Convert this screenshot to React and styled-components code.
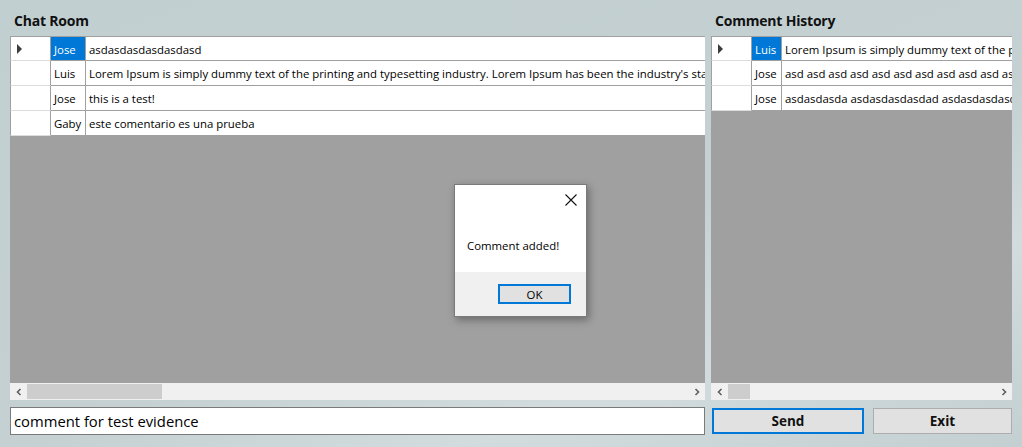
import React from "react";
import styled, { createGlobalStyle } from "styled-components";

const Global = createGlobalStyle`
  html, body { margin: 0; padding: 0; }
  body {
    width: 1022px; height: 447px; overflow: hidden;
    font-family: "Open Sans", "Noto Sans", sans-serif;
    background: linear-gradient(160deg, #c2cfd1 0%, #c4d0d2 55%, #d2dcde 75%, #c3cfd1 100%);
  }
`;

const Window = styled.div`
  width: 1022px;
  height: 447px;
  box-sizing: border-box;
  padding: 10px 10px 0 10px;
  display: grid;
  grid-template-columns: 695px 301px;
  grid-template-rows: 26px 364px 35px;
  column-gap: 6px;
  row-gap: 0;
  position: relative;
`;

const Title = styled.div`
  font-weight: 700;
  font-size: 14px;
  padding-left: 4px;
  line-height: 21px;
  color: #111;
  letter-spacing: -0.2px;
`;

const Grid = styled.div`
  position: relative;
  background: #a0a0a0;
  display: flex;
  flex-direction: column;
  overflow: hidden;
`;

const Rows = styled.div`
  flex: 1;
  display: flex;
  flex-direction: column;
  align-items: flex-start;
`;

const Row = styled.div`
  display: grid;
  grid-template-columns: ${(p) => p.$cols};
  height: 25px;
  width: 100%;
  background: #fff;
`;

const HeaderCell = styled.div`
  border-left: 1px solid #a0a0a0;
  border-top: ${(p) => (p.$first ? "1px solid #a0a0a0" : "none")};
  border-bottom: 1px solid #dcdcdc;
  border-right: 1px solid #a0a0a0;
  box-sizing: border-box;
  display: flex;
  align-items: center;
  padding-left: 6px;
`;

const Cell = styled.div`
  box-sizing: border-box;
  border-top: ${(p) => (p.$first ? "1px solid #a0a0a0" : "none")};
  border-bottom: 1px solid #a0a0a0;
  border-right: ${(p) => (p.$last ? "none" : "1px solid #a0a0a0")};
  background: ${(p) => (p.$sel ? "#0078d7" : "#fff")};
  color: ${(p) => (p.$sel ? "#fff" : "#000")};
  font-size: 11.4px;
  padding: 1px 3px 0 3px;
  display: flex;
  align-items: center;
  white-space: nowrap;
  overflow: hidden;
`;

const Arrow = styled.div`
  width: 0; height: 0;
  border-top: 5px solid transparent;
  border-bottom: 5px solid transparent;
  border-left: 5px solid #3c3c3c;
`;

const HScroll = styled.div`
  height: 17px;
  background: #f0f0f0;
  display: flex;
  align-items: stretch;
`;

const ScrollBtn = styled.div`
  width: 17px;
  display: flex;
  align-items: center;
  justify-content: center;
  color: #606060;
`;

const Track = styled.div`
  flex: 1;
  position: relative;
`;

const Thumb = styled.div`
  position: absolute;
  top: 1px; bottom: 1px;
  background: #cdcdcd;
`;

const BottomLeft = styled.div`
  padding-top: 7px;
`;

const Input = styled.input`
  width: 100%;
  height: 28px;
  box-sizing: border-box;
  border: 1px solid #7a7a7a;
  background: #fff;
  font-family: "Open Sans", "Noto Sans", sans-serif;
  font-size: 14.8px;
  padding: 0 3px;
  outline: none;
  color: #000;
`;

const Buttons = styled.div`
  padding-top: 8px;
  padding-left: 1px;
  display: grid;
  grid-template-columns: 152px 139px;
  column-gap: 9px;
`;

const Button = styled.button`
  height: 26px;
  box-sizing: border-box;
  background: #e1e1e1;
  border: ${(p) => (p.$primary ? "2px solid #0078d7" : "1px solid #adadad")};
  font-family: "Open Sans", "Noto Sans", sans-serif;
  font-weight: 700;
  font-size: 13.5px;
  color: #111;
  padding: 0;
`;

const Dialog = styled.div`
  position: absolute;
  left: 454px;
  top: 184px;
  width: 133px;
  height: 133px;
  box-sizing: border-box;
  border: 1px solid #7a7a7a;
  background: #fff;
  box-shadow: 2px 3px 8px rgba(0,0,0,0.35);
  display: flex;
  flex-direction: column;
`;

const DialogBody = styled.div`
  flex: 1;
  position: relative;
  padding: 53px 0 0 12px;
  font-size: 11.4px;
  color: #000;
`;

const Close = styled.div`
  position: absolute;
  right: 8px;
  top: 8px;
  width: 14px;
  height: 14px;
`;

const DialogFooter = styled.div`
  height: 44px;
  background: #f0f0f0;
  display: flex;
  justify-content: flex-end;
  align-items: flex-start;
  padding: 12px 15px 0 0;
  box-sizing: border-box;
`;

const OkButton = styled.div`
  width: 73px;
  height: 20px;
  box-sizing: border-box;
  border: 2px solid #0078d7;
  background: #e1e1e1;
  font-size: 11.4px;
  display: flex;
  align-items: center;
  justify-content: center;
  color: #000;
`;

const Chevron = ({ dir }) => (
  <svg width="8" height="8" viewBox="0 0 8 8">
    <path
      d={dir === "left" ? "M5.5 1 L2.5 4 L5.5 7" : "M2.5 1 L5.5 4 L2.5 7"}
      fill="none"
      stroke="#606060"
      strokeWidth="1.6"
    />
  </svg>
);

function DataGrid({ rows, cols, thumbLeft, thumbWidth }) {
  return (
    <Grid>
      <Rows>
        {rows.map((r, i) => (
          <Row key={i} $cols={cols}>
            <HeaderCell $first={i === 0}>{i === 0 && <Arrow />}</HeaderCell>
            <Cell $first={i === 0} $sel={i === 0}>{r[0]}</Cell>
            <Cell $first={i === 0} $last>{r[1]}</Cell>
          </Row>
        ))}
      </Rows>
      <HScroll>
        <ScrollBtn><Chevron dir="left" /></ScrollBtn>
        <Track>
          <Thumb style={{ left: thumbLeft, width: thumbWidth }} />
        </Track>
        <ScrollBtn><Chevron dir="right" /></ScrollBtn>
      </HScroll>
    </Grid>
  );
}

export default function App() {
  const chat = [
    ["Jose", "asdasdasdasdasdasd"],
    ["Luis", "Lorem Ipsum is simply dummy text of the printing and typesetting industry. Lorem Ipsum has been the industry's standard dummy text ever since the 1500s"],
    ["Jose", "this is a test!"],
    ["Gaby", "este comentario es una prueba"],
  ];
  const history = [
    ["Luis", "Lorem Ipsum is simply dummy text of the printing and typesetting industry."],
    ["Jose", "asd asd asd asd asd asd asd asd asd asd asd asd"],
    ["Jose", "asdasdasda asdasdasdasdad asdasdasdasd"],
  ];
  return (
    <>
      <Global />
      <Window>
        <Title>Chat Room</Title>
        <Title>Comment History</Title>
        <DataGrid rows={chat} cols="41px 35px 1fr" thumbLeft={0} thumbWidth={135} />
        <DataGrid rows={history} cols="41px 30px 1fr" thumbLeft={0} thumbWidth={22} />
        <BottomLeft>
          <Input defaultValue="comment for test evidence" />
        </BottomLeft>
        <Buttons>
          <Button $primary>Send</Button>
          <Button>Exit</Button>
        </Buttons>
        <Dialog>
          <DialogBody>
            <Close>
              <svg width="14" height="14" viewBox="0 0 14 14">
                <path d="M1.5 1.5 L12.5 12.5 M12.5 1.5 L1.5 12.5" stroke="#111" strokeWidth="1.1" />
              </svg>
            </Close>
            Comment added!
          </DialogBody>
          <DialogFooter>
            <OkButton>OK</OkButton>
          </DialogFooter>
        </Dialog>
      </Window>
    </>
  );
}
